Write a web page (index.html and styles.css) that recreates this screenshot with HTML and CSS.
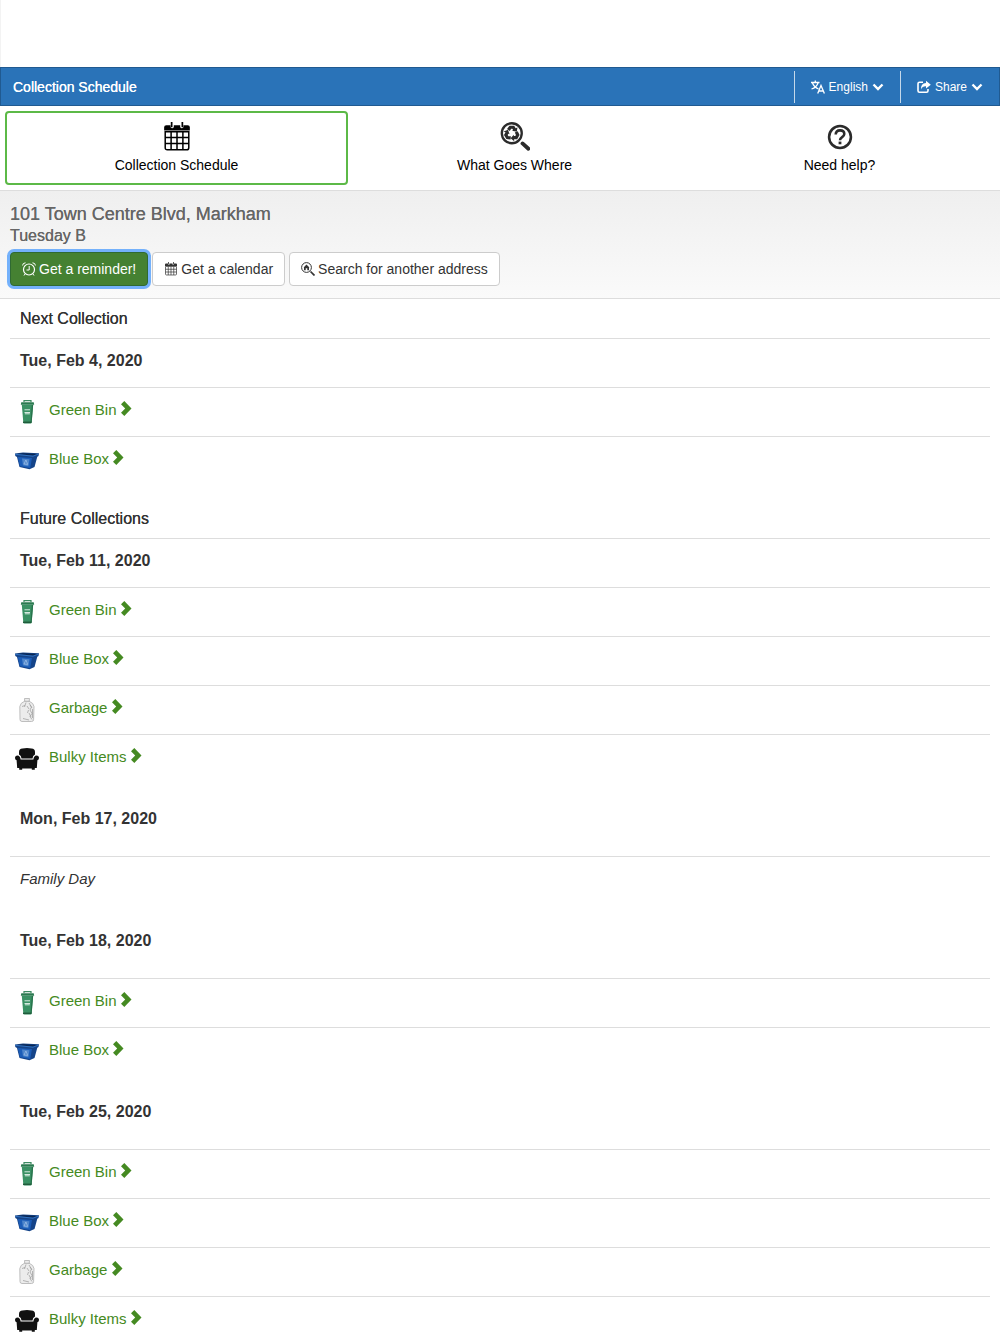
FILE: index.html
```
<!DOCTYPE html>
<html lang="en">
<head>
    <meta charset="utf-8">
    <meta name="viewport" content="width=device-width, initial-scale=1">
    <title>Collection Schedule</title>
    <link rel="stylesheet" href="styles.css">
</head>
<body>

<!-- shared icons -->
<svg class="sprite" aria-hidden="true">
    <symbol id="calendar" viewBox="0 0 24 28">
        <path d="M2 3h4v2a2 2 0 0 0 3 0V3h6v2a2 2 0 0 0 3 0V3h4q2 0 2 2v3H0V5q0-2 2-2z"/>
        <path d="M7 0v5M17 0v5" fill="none" stroke="currentColor" stroke-width="1.6"/>
        <path d="M1 9h22v15q0 2-2 2H3q-2 0-2-2zM6.500 9v17M12 9v17M17.500 9v17M1 14.500h22M1 20h22" fill="none" stroke="currentColor" stroke-width="1.400"/>
    </symbol>
    <symbol id="chevron-down" viewBox="0 0 12 8">
        <path d="M1.500 1.500L6 6l4.500-4.500" fill="none" stroke="currentColor" stroke-width="2.400"/>
    </symbol>
    <symbol id="chevron-right" viewBox="0 0 11 15">
        <path d="M0 3.200L3.300 0l7.200 7.500L3.300 15 0 11.800l4.200-4.300z"/>
    </symbol>
    <symbol id="green-bin" viewBox="0 0 24 24">
        <path d="M9 2V0.700h7V2" fill="none" stroke="#3d8a62" stroke-width="1.200"/>
        <path d="M6.300 2.200h12.400l.5 2.600H5.800z" fill="#2b7a50"/>
        <path d="M6.800 4.800h11.400l-1.500 17.700q-.1 1-1.200 1h-6q-1.100 0-1.200-1z" fill="#3a9164"/>
        <path d="M16.800 5h1.300l-1.500 17-1.200 1z" fill="#27714a"/>
        <path d="M9.500 9.800h5.500M9.500 12.500h5.500M9.800 13.800h5" stroke="#d5eadf"/>
        <path d="M8 22.300h8.500" stroke="#205c3c" stroke-width="1.500"/>
    </symbol>
    <symbol id="blue-box" viewBox="0 0 24 24">
        <path d="M0 4.500L8 3.500l16 .700-.500 2.800-1.200.800L19.500 18l-5 2.200L4.500 18 2 8 .300 7z" fill="#154489"/>
        <path d="M2 5l6-.800 14.500.700-4.500 1.600z" fill="#0a2754"/>
        <path d="M.3 5.300l17.700 1.900 5.600-2.200" fill="none" stroke="#3577c6" stroke-width=".900"/>
        <path d="M2.800 8l14.200 1-1.800 10L5 17.300z" fill="#1c5db8"/>
        <path d="M7 9.500l7.500.700-1.200 7-5.300-1z" fill="#4f86cb"/>
        <path d="M9 15l1.900-4 1.800 4.400z" fill="none" stroke="#a3c3ea" stroke-width=".700"/>
    </symbol>
    <symbol id="garbage" viewBox="0 0 24 24">
        <path d="M9.500 .5h5l-.3 2.700q4.600 2 4.800 5.300l-.4 13q0 2-2 2H7q-2 0-2-2L4.800 8.500q.6-3.800 4.900-5.300z" fill="#ececec" stroke="#b0b0b0" stroke-width=".800"/>
        <path d="M9.500 3.300h5M11 4.500L9.500 9M14 5l2.500 4-1.500 3 2 3.500-2 3 2 3M13.500 12l-1 3M8 20.500l6 1.500M7 8.500l3-1M15 7l2 3M14 15l2 4M12 8l2 3M17.500 11v9" fill="none" stroke="#999" stroke-width=".700"/>
    </symbol>
    <symbol id="armchair" viewBox="0 0 24 24">
        <path d="M4 7.500V5q0-3.500 3.500-3.500Q12 .600 16.500 1.500 20 1.500 20 5v2.500q-2.300 1-2.500 4H6.500q-.2-3-2.500-4z"/>
        <path d="M0 11q0-2.500 2.500-2.500Q5.300 8.800 5.600 12.500h12.800q.3-3.700 3.100-4Q24 8.500 24 11q0 1.800-1.600 2.200L21.800 21h-2v1.800h-3V21.500H7.200v1.300h-3V21h-2L1.600 13.200Q0 12.800 0 11z"/>
    </symbol>
</svg>

<div class="banner"></div>

<header class="topbar">
    <h1>Collection Schedule</h1>
    <div class="topbar-menu">
        <button type="button" class="menu-lang">
            <svg class="icon-menu" viewBox="0 0 14 14" fill="none" stroke="currentColor" stroke-width="1.300" aria-hidden="true"><path d="M0 2.500h8.500M4.300.500v2M1.500 3q1.500 4 6 6M7 3Q5.500 7.500.500 9M6.700 13.500L10 5.500l3.400 8M7.800 11h4.500"/></svg>
            English
            <svg class="icon-caret" aria-hidden="true"><use href="#chevron-down"/></svg>
        </button>
        <button type="button" class="menu-share">
            <svg class="icon-menu" viewBox="0 0 14 14" aria-hidden="true"><path d="M6 2.300H2.500Q1 2.300 1 3.800v7Q1 12.300 2.500 12.300h7q1.500 0 1.500-1.500V9" fill="none" stroke="currentColor" stroke-width="1.600"/><path d="M9 .800L13.800 4.700 9 8.600V6.300Q5.500 6 4 9.500 3.700 3.400 9 3.100z"/></svg>
            Share
            <svg class="icon-caret" aria-hidden="true"><use href="#chevron-down"/></svg>
        </button>
    </div>
</header>

<nav class="tabs">
    <a href="#schedule" class="tab active">
        <svg class="icon-tab" aria-hidden="true"><use href="#calendar"/></svg>
        Collection Schedule
    </a>
    <a href="#what" class="tab">
        <svg class="icon-tab icon-dark" viewBox="0 0 28 28" aria-hidden="true">
            <circle cx="11" cy="10.500" r="9.300" fill="none" stroke="currentColor" stroke-width="2.200"/>
            <path d="M21 20l5.500 5" stroke="currentColor" stroke-width="3.600" stroke-linecap="round"/>
            <g id="arrow"><path d="M7.800 7.500L9.600 4.900h2.800l1.400 2.300" fill="none" stroke="currentColor" stroke-width="3"/><path d="M11.200 8.200l4.500.900.600-4.300z"/></g>
            <use href="#arrow" transform="rotate(120 11 10.500)"/>
            <use href="#arrow" transform="rotate(240 11 10.500)"/>
        </svg>
        What Goes Where
    </a>
    <a href="#help" class="tab">
        <svg class="icon-tab icon-dark" viewBox="0 0 28 28" fill="none" stroke="currentColor" aria-hidden="true"><circle cx="14" cy="14" r="10.200" stroke-width="2.400"/><path d="M10 11.700q0-3.900 4-3.900t4 3.400q0 1.600-2 2.900t-2 3" stroke-width="2.400"/><path d="M14 18.300v2.500" stroke-width="2.600"/></svg>
        Need help?
    </a>
</nav>

<section class="address">
    <h2>101 Town Centre Blvd, Markham</h2>
    <p>Tuesday B</p>
    <div class="actions">
        <button type="button" class="btn btn-primary">
            <svg class="icon-btn" viewBox="0 0 14 14" fill="none" stroke="currentColor" aria-hidden="true"><circle cx="7" cy="7.500" r="5.500" stroke-width="1.200"/><path d="M7.200 4v4H4.500M.600 3.500Q.600 1 3.500.800M13.400 3.500Q13.400 1 10.500.800M3 12l-1 1.500M11 12l1 1.500"/></svg>
            Get a reminder!
        </button>
        <button type="button" class="btn">
            <svg class="icon-btn" aria-hidden="true"><use href="#calendar"/></svg>
            Get a calendar
        </button>
        <button type="button" class="btn">
            <svg class="icon-btn" viewBox="0 0 14 14" aria-hidden="true"><circle cx="5.500" cy="5.500" r="4.900" fill="none" stroke="currentColor"/><path d="M2.500 5.500l3-3 3 3H8v2.700H6.300V6.300H4.700v1.900H3V5.500z"/><path d="M9.500 9.500l4 4" stroke="currentColor" stroke-width="1.700"/></svg>
            Search for another address
        </button>
    </div>
</section>

<main class="schedule">
    <section class="group">
        <h3 class="group-title">Next Collection</h3>
        <h4 class="date">Tue, Feb 4, 2020</h4>
        <ul>
            <li><svg class="icon-item"><use href="#green-bin"/></svg><a href="#green">Green Bin <svg class="arrow"><use href="#chevron-right"/></svg></a></li>
            <li><svg class="icon-item"><use href="#blue-box"/></svg><a href="#blue">Blue Box <svg class="arrow"><use href="#chevron-right"/></svg></a></li>
        </ul>
    </section>

    <section class="group">
        <h3 class="group-title">Future Collections</h3>
        <h4 class="date">Tue, Feb 11, 2020</h4>
        <ul>
            <li><svg class="icon-item"><use href="#green-bin"/></svg><a href="#green">Green Bin <svg class="arrow"><use href="#chevron-right"/></svg></a></li>
            <li><svg class="icon-item"><use href="#blue-box"/></svg><a href="#blue">Blue Box <svg class="arrow"><use href="#chevron-right"/></svg></a></li>
            <li><svg class="icon-item"><use href="#garbage"/></svg><a href="#garbage-day">Garbage <svg class="arrow"><use href="#chevron-right"/></svg></a></li>
            <li><svg class="icon-item"><use href="#armchair"/></svg><a href="#bulky">Bulky Items <svg class="arrow"><use href="#chevron-right"/></svg></a></li>
        </ul>

        <h4 class="date">Mon, Feb 17, 2020</h4>
        <ul>
            <li class="holiday"><em>Family Day</em></li>
        </ul>

        <h4 class="date">Tue, Feb 18, 2020</h4>
        <ul>
            <li><svg class="icon-item"><use href="#green-bin"/></svg><a href="#green">Green Bin <svg class="arrow"><use href="#chevron-right"/></svg></a></li>
            <li><svg class="icon-item"><use href="#blue-box"/></svg><a href="#blue">Blue Box <svg class="arrow"><use href="#chevron-right"/></svg></a></li>
        </ul>

        <h4 class="date">Tue, Feb 25, 2020</h4>
        <ul>
            <li><svg class="icon-item"><use href="#green-bin"/></svg><a href="#green">Green Bin <svg class="arrow"><use href="#chevron-right"/></svg></a></li>
            <li><svg class="icon-item"><use href="#blue-box"/></svg><a href="#blue">Blue Box <svg class="arrow"><use href="#chevron-right"/></svg></a></li>
            <li><svg class="icon-item"><use href="#garbage"/></svg><a href="#garbage-day">Garbage <svg class="arrow"><use href="#chevron-right"/></svg></a></li>
            <li><svg class="icon-item"><use href="#armchair"/></svg><a href="#bulky">Bulky Items <svg class="arrow"><use href="#chevron-right"/></svg></a></li>
        </ul>
    </section>
</main>

</body>
</html>
```
FILE: styles.css
```
* {
    box-sizing: border-box;
}
body {
    margin: 0;
    background: white;
    color: #333;
    fill: currentColor;
    font-family: "Helvetica Neue", "Liberation Sans", Arial, sans-serif;
    font-size: 15px;
    line-height: 20px;
}
h1, h2, h3, h4, p, ul {
    margin: 0;
    padding: 0;
    font-weight: normal;
}
ul {
    list-style: none;
}
button {
    font-family: inherit;
    cursor: pointer;
}
svg {
    flex: none;
}
.sprite {
    display: none;
}

.banner {
    height: 67px;
    border-left: 1px solid #f3f3f3;
}

.topbar {
    display: flex;
    justify-content: space-between;
    align-items: center;
    height: 39px;
    padding-left: 12px;
    background: #2a73b8;
    border: 1px solid #205a91;
    color: white;
}
.topbar h1 {
    font-size: 14px;
    text-shadow: 0 0 0 white;
}
.topbar-menu {
    display: flex;
}
.topbar-menu button {
    display: flex;
    align-items: center;
    gap: 4px;
    height: 32px;
    padding: 0 16px;
    background: none;
    border: 0;
    border-left: 1px solid #c4d8ea;
    color: white;
    font-size: 12px;
}
.icon-menu {
    width: 14px;
    height: 14px;
}
.icon-caret {
    width: 12px;
    height: 8px;
}

.tabs {
    display: grid;
    grid-template-columns: 350fr 326fr 324fr;
    padding: 5px 0;
}
.tab {
    display: flex;
    flex-direction: column;
    align-items: center;
    gap: 3px;
    margin: 0 2px 0 5px;
    padding: 9px 0 8px;
    border: 2px solid transparent;
    border-radius: 4px;
    color: black;
    font-size: 14px;
    text-decoration: none;
}
.tab.active {
    border-color: #5cb947;
}
.icon-tab {
    width: 30px;
    height: 30px;
}
.icon-dark {
    color: #2b2b2b;
}

.address {
    padding: 12px 10px;
    background: linear-gradient(#efefef, #fafafa);
    border-top: 1px solid #ddd;
    border-bottom: 1px solid #ddd;
    color: #666;
}
.address h2 {
    font-size: 18px;
    line-height: 22px;
    text-shadow: 0 0 0 #666;
}
.address p {
    font-size: 16px;
    line-height: 22px;
    text-shadow: 0 0 0 #666;
}
.actions {
    display: flex;
    flex-wrap: wrap;
    gap: 4px;
    margin-top: 5px;
}
.btn {
    display: flex;
    align-items: center;
    gap: 3px;
    height: 34px;
    padding: 0 11px;
    background: white;
    border: 1px solid #ccc;
    border-radius: 4px;
    color: #333;
    font-size: 14px;
}
.btn-primary {
    background: #458132;
    border-color: #2f6a33;
    box-shadow: 0 0 0 3px #74b1fb;
    color: white;
}
.icon-btn {
    width: 14px;
    height: 14px;
}

.schedule {
    padding: 0 10px;
}
.group + .group {
    margin-top: 14px;
}
.group-title {
    padding: 10px 10px 9px;
    border-bottom: 1px solid #ddd;
    font-size: 16px;
    text-shadow: 0 0 0 #333;
}
.date {
    padding: 26px 10px 27px;
    font-size: 16px;
    font-weight: bold;
}
.group-title + .date {
    padding: 12px 10px 16px;
}
.schedule li {
    display: flex;
    gap: 10px;
    height: 49px;
    padding: 12px 5px 0;
    border-top: 1px solid #ddd;
}
.schedule li a {
    color: #458a22;
    text-decoration: none;
}
.schedule .holiday {
    padding-left: 10px;
}
.icon-item {
    width: 24px;
    height: 24px;
    color: #111;
}
.arrow {
    width: 11px;
    height: 15px;
    vertical-align: -1px;
}
.group:last-child ul:last-child li:last-child {
    height: 37px;
}
```
